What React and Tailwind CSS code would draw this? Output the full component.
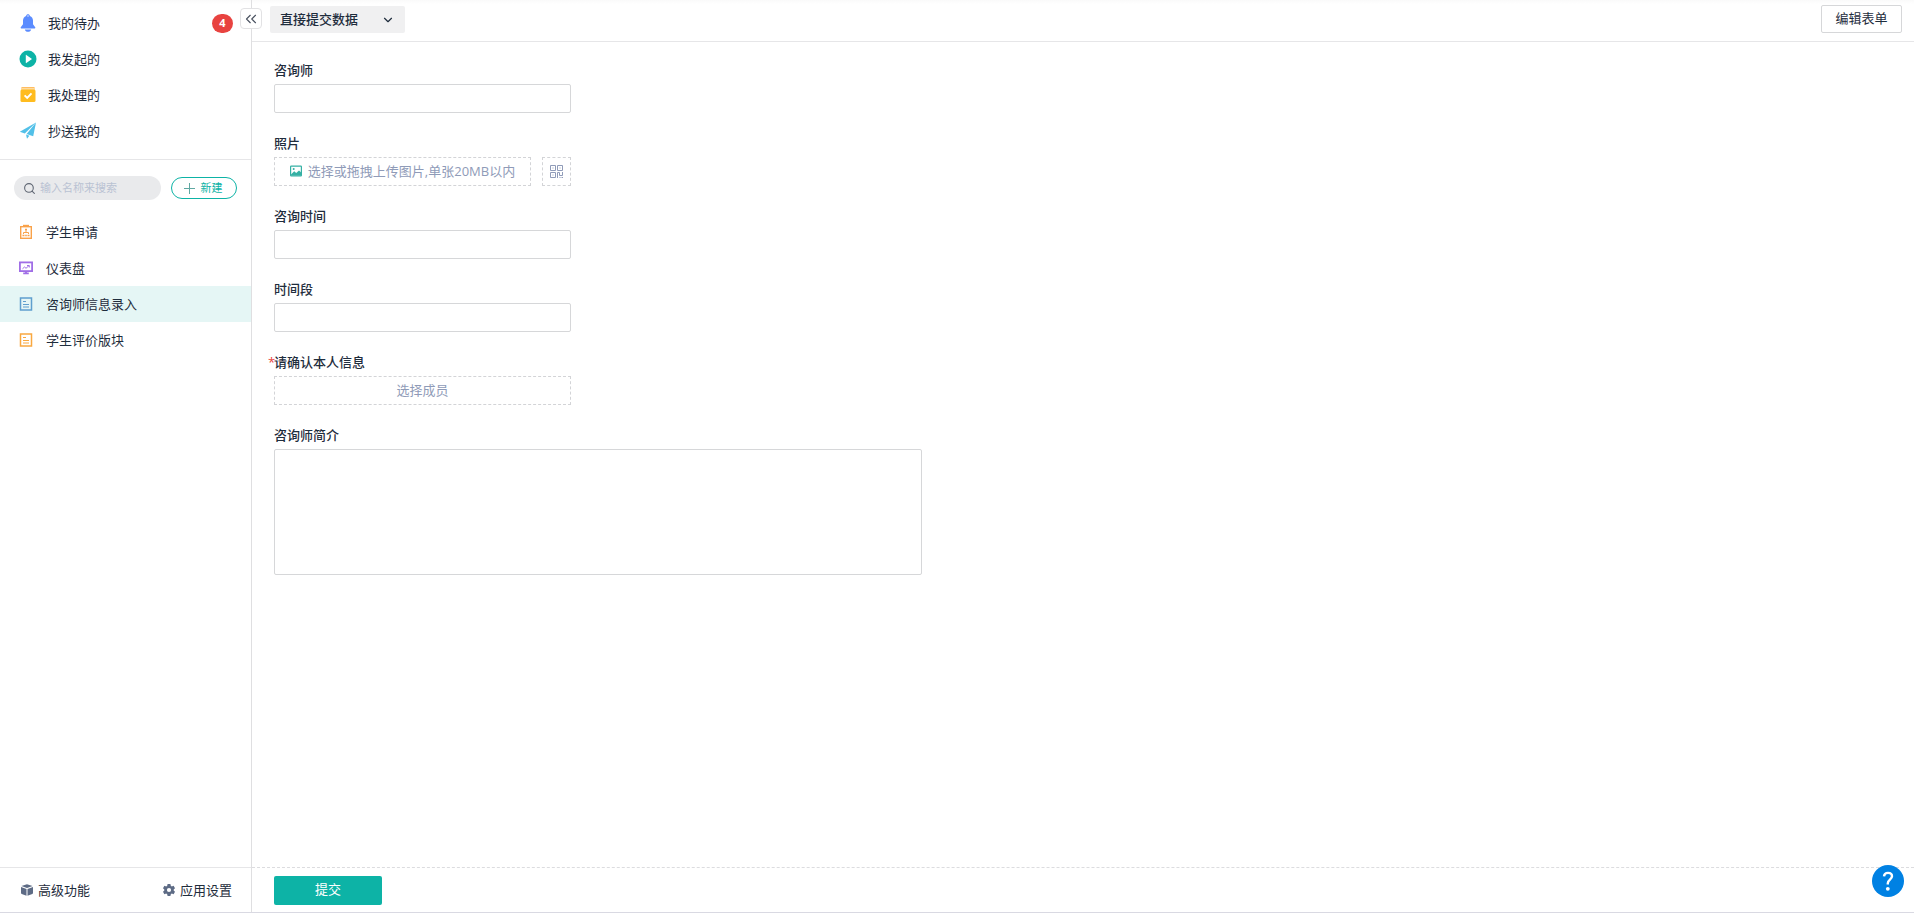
import { useState } from 'react'
import { ChevronDown, ChevronsLeft, Search } from 'lucide-react'

/* ---------- Icons ---------- */

const BellIcon = () => (
  <svg width="18" height="18" viewBox="0 0 18 18" fill="#5b8cff">
    <path d="M9 .3c1 0 1.800.7 1.900 1.600 2 .7 3.100 2.500 3.100 4.700v3.600l2.200 3.100c.4.500.1 1.100-.5 1.100H2.300c-.6 0-.9-.6-.5-1.100L4 10.200V6.600c0-2.200 1.100-4 3.100-4.700C7.200 1 8 .3 9 .3Z" />
    <circle cx="9" cy="2" r=".8" fill="#dce7ff" />
    <path d="M5.800 15.400h6.400c-.4 1.400-1.600 2.300-3.200 2.300s-2.800-.9-3.200-2.300Z" />
  </svg>
)

const PlayIcon = () => (
  <svg width="18" height="18" viewBox="0 0 18 18">
    <circle cx="9" cy="9" r="8.500" fill="#0db3a6" />
    <path d="M6.800 5.200v7.600c0 .3.300.4.500.3l5.400-3.800a.4.400 0 0 0 0-.6L7.300 4.900c-.2-.1-.5 0-.5.3Z" fill="#fff" />
  </svg>
)

const DoneIcon = () => (
  <svg width="18" height="18" viewBox="0 0 18 18">
    <path d="M3 1.200h12c.5 0 .8.300.8.800H2.200c0-.5.300-.8.800-.8Z" fill="#ffa82e" />
    <path d="M2 2h14v2H2z" fill="#ffdba0" />
    <rect x="1.500" y="3.500" width="15" height="12.500" rx="1.500" fill="#ffbc1f" />
    <path d="m5.600 9.400 2.600 2.500 4.300-4.500" fill="none" stroke="#fff" strokeWidth="2" />
  </svg>
)

const PlaneIcon = () => (
  <svg width="18" height="18" viewBox="0 0 18 18" fill="#52c0e8">
    <path d="M17 .5.8 9.700l5 1.700L17 .5Z" />
    <path d="M17 .5 7.600 11.900l6.600 2.400L17 .5Z" />
    <path d="M7 12.500 8 16.800l2.400-3.100L7 12.500Z" />
  </svg>
)

const FlowFormIcon = () => (
  <svg width="14" height="16" viewBox="0 0 14 16" fill="none" stroke="#f9a24a">
    <rect x="1.700" y="2.700" width="10.600" height="11.600" strokeWidth="1.400" />
    <path d="M4 1.800h6" strokeWidth="2" />
    <path d="M7 5v3M4.500 10V8.500h5V10" />
    <path d="M6 5.500h2M3.500 11.500h2M6.200 11.500h1.600M8.500 11.500h2" strokeWidth="1.600" />
  </svg>
)

const DashboardIcon = () => (
  <svg width="14" height="14" viewBox="0 0 14 14" fill="none" stroke="#a06ee6">
    <rect x=".9" y="1.400" width="12.200" height="8.700" strokeWidth="1.800" />
    <path d="M3.500 7.800 5.500 6l1.500 1.300L10 4.600M8 4.500h2.300v2" />
    <path d="M7 10.500v2M4.200 12.400h5.600" strokeWidth="1.800" />
  </svg>
)

const FormIcon = ({ color }) => (
  <svg width="14" height="16" viewBox="0 0 14 16" fill="none" stroke={color}>
    <rect x="1.500" y="2" width="11" height="12" strokeWidth="1.500" />
    <path d="M4 5.500h3M4 8.500h6M4 11h6" />
  </svg>
)

const CubeIcon = () => (
  <svg width="14" height="14" viewBox="0 0 14 14" fill="#5d6b85">
    <path d="M7 1.200 12.600 3 7 5.100 1.400 3 7 1.200Z" />
    <path d="M1 3.900 6.500 6v6.800L1.700 10.900c-.5-.2-.7-.5-.7-1V3.900ZM13 3.900 7.500 6v6.800l4.800-1.900c.5-.2.700-.5.700-1V3.900Z" />
  </svg>
)

const GearIcon = () => (
  <svg width="14" height="14" viewBox="0 0 14 14">
    <path
      fill="#5d6b85"
      fillRule="evenodd"
      d="M5.600 1h2.800l.4 1.800 1 .6 1.800-.6L13 5.200 11.700 6.400v1.200L13 8.800l-1.400 2.400-1.800-.6-1 .6-.4 1.800H5.600l-.4-1.800-1-.6-1.800.6L1 8.800l1.300-1.200V6.400L1 5.200l1.400-2.400 1.800.6 1-.6L5.600 1ZM7 4.900a2.100 2.100 0 1 0 0 4.200 2.100 2.100 0 0 0 0-4.200Z"
    />
  </svg>
)

const PictureIcon = () => (
  <svg width="12" height="12" viewBox="0 0 12 12">
    <rect x=".6" y="1.100" width="10.800" height="9.800" rx=".6" fill="none" stroke="#35b0a4" strokeWidth="1.200" />
    <path d="M1 9.500 4.200 6.300l2 1.700L9 5.600l2.200 2v3H1V9.500Z" fill="#35b0a4" />
    <circle cx="3.700" cy="3.900" r="1" fill="#35b0a4" />
  </svg>
)

const QrIcon = () => (
  <svg width="13" height="13" viewBox="0 0 13 13" fill="none" stroke="#8f9bb8">
    <path d="M.5.500h5v5h-5zM7.500.500h5v5h-5zM.5 7.500h5v5h-5z" />
    <path d="M2.500 3h1M9.500 3h1M2.500 10h1M7.500 13V7.500h2v3h3V7M9.500 12.500h1M11.500 12.500H13" />
  </svg>
)

/* ---------- Data ---------- */

const tasks = [
  { label: '我的待办', icon: <BellIcon />, count: 4 },
  { label: '我发起的', icon: <PlayIcon /> },
  { label: '我处理的', icon: <DoneIcon /> },
  { label: '抄送我的', icon: <PlaneIcon /> },
]

const forms = [
  { label: '学生申请', icon: <FlowFormIcon /> },
  { label: '仪表盘', icon: <DashboardIcon /> },
  { label: '咨询师信息录入', icon: <FormIcon color="#5f9fce" /> },
  { label: '学生评价版块', icon: <FormIcon color="#f9a840" /> },
]

/* ---------- Sidebar ---------- */

function Sidebar() {
  const [active, setActive] = useState('咨询师信息录入')

  return (
    <aside className="relative flex w-[252px] shrink-0 flex-col border-r border-[#dfdfe1]">
      <nav className="border-b border-[#e6e6e8] pt-[5px] pb-2.5">
        {tasks.map((t) => (
          <a key={t.label} href="#" className="flex h-9 items-center gap-[11px] pr-[18px] pl-[19px]">
            {t.icon}
            <span className="flex-1">{t.label}</span>
            {t.count && (
              <span className="flex h-[19px] w-[21px] items-center justify-center rounded-full bg-[#e84340] text-[11px] font-bold text-white">
                {t.count}
              </span>
            )}
          </a>
        ))}
      </nav>

      <div className="flex items-center gap-2.5 px-3.5 pt-4 pb-3.5">
        <label className="flex h-6 min-w-0 flex-1 items-center gap-1 rounded-full bg-[#e9eaec] pl-[9px]">
          <Search size={13} className="shrink-0 text-[#5f6673]" />
          <input
            type="text"
            aria-label="搜索"
            placeholder="输入名称来搜索"
            className="w-full min-w-0 bg-transparent text-[11px] outline-none placeholder:text-[#b9c2d3]"
          />
        </label>
        <button className="flex h-[22px] w-[66px] items-center justify-center gap-1.5 rounded-full border border-[#0db3a6] pr-0.5 text-[11px] text-[#0db3a6]">
          <svg width="11" height="11" viewBox="0 0 11 11" stroke="#5fa8a2">
            <path d="M5.500 0v11M0 5.500h11" />
          </svg>
          新建
        </button>
      </div>

      <nav className="flex-1">
        {forms.map((f) => (
          <a
            key={f.label}
            href="#"
            onClick={() => setActive(f.label)}
            className={`flex h-9 items-center gap-[13px] pl-[19px] ${active === f.label ? 'bg-[#e5f6f5]' : ''}`}
          >
            {f.icon}
            <span>{f.label}</span>
          </a>
        ))}
      </nav>

      <div className="flex h-[45px] items-center justify-between border-t border-[#e6e6e8] pr-[19px] pl-5">
        <button className="flex items-center gap-1">
          <CubeIcon />
          高级功能
        </button>
        <button className="flex items-center gap-1">
          <GearIcon />
          应用设置
        </button>
      </div>

      {/* Collapse toggle sits over the sidebar edge */}
      <button
        aria-label="收起"
        className="absolute top-2 -right-[11px] flex h-[21px] w-[22px] items-center justify-center rounded-sm border border-[#e2e2e4] bg-white text-[#4a5260]"
      >
        <ChevronsLeft size={18} strokeWidth={1.500} className="shrink-0" />
      </button>
    </aside>
  )
}

/* ---------- Form ---------- */

function Field({ id, label, required, children }) {
  return (
    <div className="flex flex-col items-start gap-1">
      <label htmlFor={id} className="relative h-5 font-medium leading-5">
        {required && <span className="absolute -left-1.5 font-normal text-[#e84340]">*</span>}
        {label}
      </label>
      {children}
    </div>
  )
}

const inputClass = 'h-[29px] w-[297px] rounded-xs border border-[#d6d7d9] px-2 outline-none'
const dashedClass = 'flex h-[29px] items-center justify-center border border-dashed border-[#d3d4d7] text-[#8f9bb8]'

export default function App() {
  return (
    <div className="flex h-screen border-b border-[#d9d9e2] bg-linear-to-b from-[#fafafa] to-white to-[4px] font-['Open_Sans','Noto_Sans_CJK_SC',sans-serif] text-[13px] leading-5 text-[#1f2d3d]">
      <Sidebar />

      <div className="flex min-w-0 flex-1 flex-col">
        <header className="flex h-[42px] items-start justify-between border-b border-[#e6e6e8] pr-3 pl-[18px]">
          <div className="relative mt-1.5">
            <select
              aria-label="提交方式"
              className="h-[27px] w-[135px] appearance-none rounded-xs bg-[#f0f0f1] pb-0.5 pl-2.5 font-medium outline-none"
            >
              <option>直接提交数据</option>
            </select>
            <ChevronDown size={14} className="pointer-events-none absolute top-[7px] right-2.5" />
          </div>
          <button className="mt-[5px] h-7 w-[81px] rounded-xs border border-[#d6d7d9] bg-white pb-0.5">编辑表单</button>
        </header>

        <main className="flex flex-1 flex-col gap-5 overflow-auto px-[22px] pt-[18px]">
          <Field id="name" label="咨询师">
            <input id="name" type="text" className={inputClass} />
          </Field>

          <Field id="photo" label="照片">
            <div className="flex w-[297px] gap-[11px]">
              <button id="photo" className={`${dashedClass} flex-1 gap-1.5 pb-0.5`}>
                <PictureIcon />
                选择或拖拽上传图片,单张20MB以内
              </button>
              <button aria-label="扫码上传" className={`${dashedClass} w-[29px]`}>
                <QrIcon />
              </button>
            </div>
          </Field>

          <Field id="time" label="咨询时间">
            <input id="time" type="text" className={inputClass} />
          </Field>

          <Field id="period" label="时间段">
            <input id="period" type="text" className={inputClass} />
          </Field>

          <Field id="member" label="请确认本人信息" required>
            <button id="member" className={`${dashedClass} w-[297px] pb-0.5`}>选择成员</button>
          </Field>

          <Field id="intro" label="咨询师简介">
            <textarea
              id="intro"
              className="h-[126px] w-[648px] max-w-full resize-none rounded-xs border border-[#d6d7d9] p-2 outline-none"
            />
          </Field>
        </main>

        <footer className="flex h-[45px] items-center border-t border-dashed border-[#dcdcdf] px-[22px]">
          <button className="h-[29px] w-[108px] rounded-xs bg-[#0db3a6] pb-0.5 text-white">提交</button>
        </footer>
      </div>

      {/* Floating help */}
      <button
        aria-label="帮助"
        className="fixed right-2.5 bottom-4 flex size-8 items-center justify-center rounded-full bg-[#0081e3]"
      >
        <svg width="32" height="32" viewBox="0 0 32 32" fill="none">
          <path d="M12 11.400c.2-2.200 1.700-3.500 4-3.500 2.400 0 4 1.300 4 3.400 0 3.200-4.200 3.400-4.200 6.900v1.200" stroke="#fff" strokeWidth="2.400" />
          <circle cx="15.800" cy="23.800" r="1.900" fill="#fff" />
        </svg>
      </button>
    </div>
  )
}
